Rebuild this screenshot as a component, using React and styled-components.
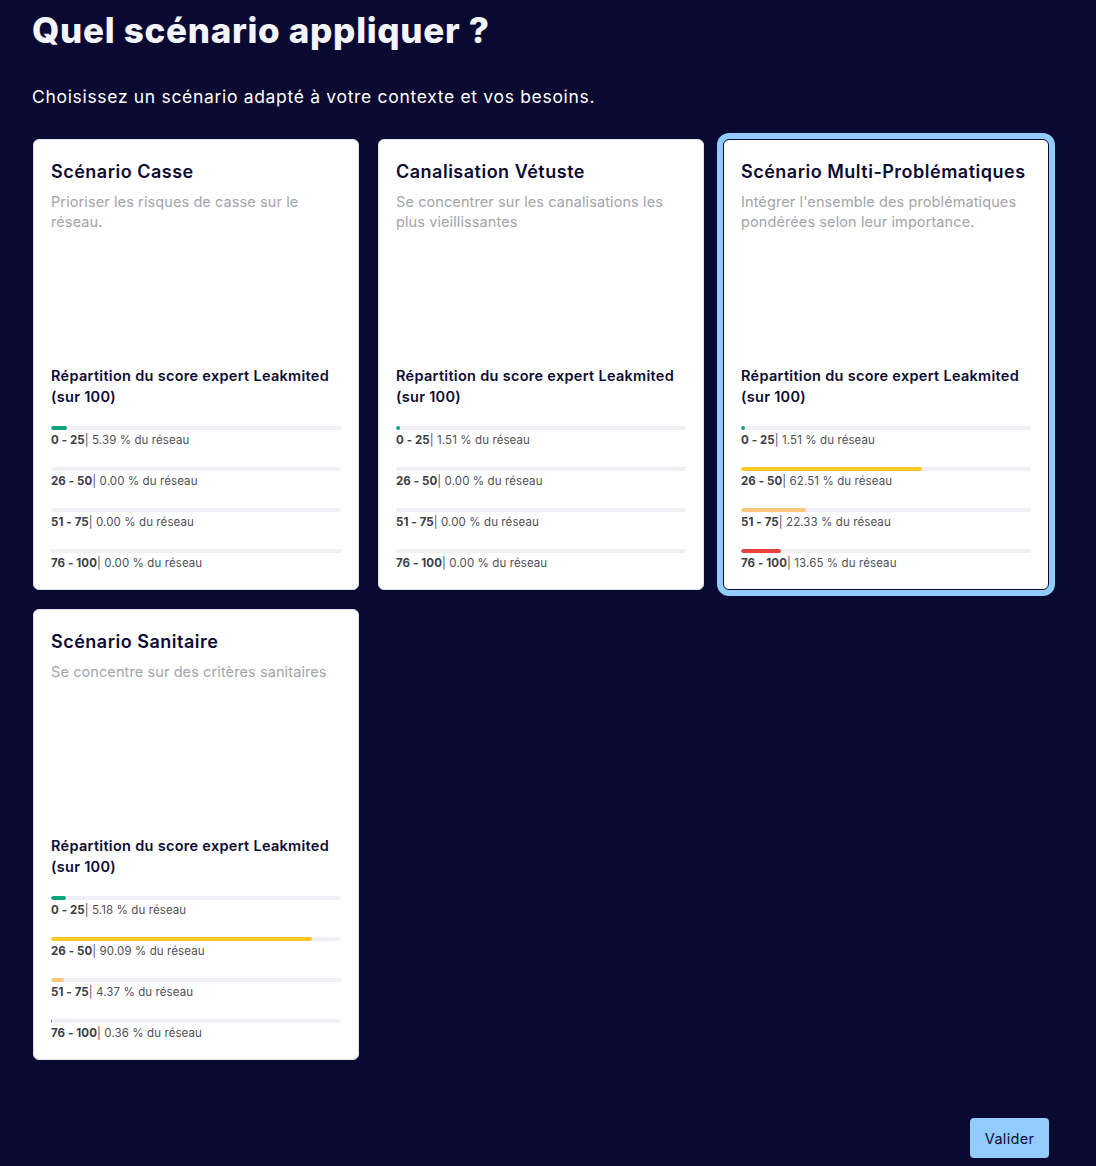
import React from "react";
import styled, { createGlobalStyle } from "styled-components";

const Global = createGlobalStyle`
  html, body { margin: 0; padding: 0; background: #0a0932; }
  body { font-family: "Inter", "Open Sans", sans-serif; }
  * { box-sizing: border-box; }
`;

const Page = styled.div`
  min-height: 1166px;
  padding: 9px 48px 8px 32px;
  background: #0a0932;
  display: flex;
  flex-direction: column;
`;

const Title = styled.h1`
  margin: 0;
  color: #f4f5fb;
  font-size: 35px;
  font-weight: 800;
  letter-spacing: 0.7px;
  line-height: 42px;
`;

const Subtitle = styled.p`
  margin: 34px 0 0;
  color: #ffffff;
  font-size: 17.5px;
  line-height: 24px;
  font-weight: 400;
  letter-spacing: 0.68px;
`;

const Grid = styled.div`
  margin-top: 30px;
  display: grid;
  grid-template-columns: repeat(3, 326px);
  column-gap: 19px;
  row-gap: 19px;
  padding-left: 1px;
`;

const Card = styled.div`
  height: 451px;
  background: #ffffff;
  border-radius: 6px;
  border: 1px solid ${(p) => (p.$selected ? "#0a0932" : "#e3e3ea")};
  box-shadow: ${(p) => (p.$selected ? "0 0 0 6px #90ccfc" : "none")};
  padding: 20px 17px 18px;
  display: flex;
  flex-direction: column;
`;

const CardTitle = styled.h2`
  margin: 0;
  font-size: 18px;
  line-height: 24px;
  font-weight: 600;
  color: #0d0b33;
  letter-spacing: 0.5px;
`;

const CardDesc = styled.p`
  margin: 8px 0 0;
  font-size: 14.5px;
  line-height: 20px;
  color: #a4a4ab;
  letter-spacing: 0.1px;
`;

const Distribution = styled.div`
  margin-top: auto;
  display: flex;
  flex-direction: column;
`;

const DistTitle = styled.h3`
  margin: 0 0 19px;
  font-size: 14.5px;
  line-height: 21px;
  font-weight: 600;
  color: #0d0b33;
  letter-spacing: 0.3px;
`;

const Row = styled.div`
  display: flex;
  flex-direction: column;
  gap: 2px;
  & + & { margin-top: 19px; }
`;

const Track = styled.div`
  height: 4px;
  border-radius: 2px;
  background: #f0f0f4;
  overflow: hidden;
`;

const Fill = styled.div`
  height: 100%;
  border-radius: 2px;
  background: ${(p) => p.$color};
`;

const Label = styled.div`
  font-size: 11.5px;
  line-height: 16px;
  color: #505058;
  letter-spacing: 0.1px;
  b { font-weight: 700; color: #3e3e46; }
`;

const Footer = styled.div`
  margin-top: auto;
  display: flex;
  justify-content: flex-end;
`;

const Button = styled.button`
  border: none;
  background: #91ccfd;
  color: #0d0b33;
  border-radius: 4px;
  width: 79px;
  height: 40px;
  margin-right: -1px;
  font-family: inherit;
  font-size: 14.5px;
  letter-spacing: 0.3px;
  cursor: pointer;
`;

const colors = ["#0ea47c", "#fec925", "#fec87c", "#e9433b"];
const ranges = ["0 - 25", "26 - 50", "51 - 75", "76 - 100"];

const scenarios = [
  {
    title: "Scénario Casse",
    desc: "Prioriser les risques de casse sur le réseau.",
    values: [5.39, 0, 0, 0],
  },
  {
    title: "Canalisation Vétuste",
    desc: "Se concentrer sur les canalisations les plus vieillissantes",
    values: [1.51, 0, 0, 0],
  },
  {
    title: "Scénario Multi-Problématiques",
    desc: "Intégrer l'ensemble des problématiques pondérées selon leur importance.",
    values: [1.51, 62.51, 22.33, 13.65],
    selected: true,
  },
  {
    title: "Scénario Sanitaire",
    desc: "Se concentre sur des critères sanitaires",
    values: [5.18, 90.09, 4.37, 0.36],
  },
];

export default function App() {
  return (
    <>
      <Global />
      <Page>
        <Title>Quel scénario appliquer ?</Title>
        <Subtitle>Choisissez un scénario adapté à votre contexte et vos besoins.</Subtitle>
        <Grid>
          {scenarios.map((s) => (
            <Card key={s.title} $selected={s.selected}>
              <CardTitle>{s.title}</CardTitle>
              <CardDesc>{s.desc}</CardDesc>
              <Distribution>
                <DistTitle>
                  Répartition du score expert Leakmited
                  <br />
                  (sur 100)
                </DistTitle>
                {s.values.map((v, i) => (
                  <Row key={i}>
                    <Track>
                      <Fill $color={colors[i]} style={{ width: `${v}%` }} />
                    </Track>
                    <Label>
                      <b>{ranges[i]}</b>| {v.toFixed(2)} % du réseau
                    </Label>
                  </Row>
                ))}
              </Distribution>
            </Card>
          ))}
        </Grid>
        <Footer>
          <Button>Valider</Button>
        </Footer>
      </Page>
    </>
  );
}
